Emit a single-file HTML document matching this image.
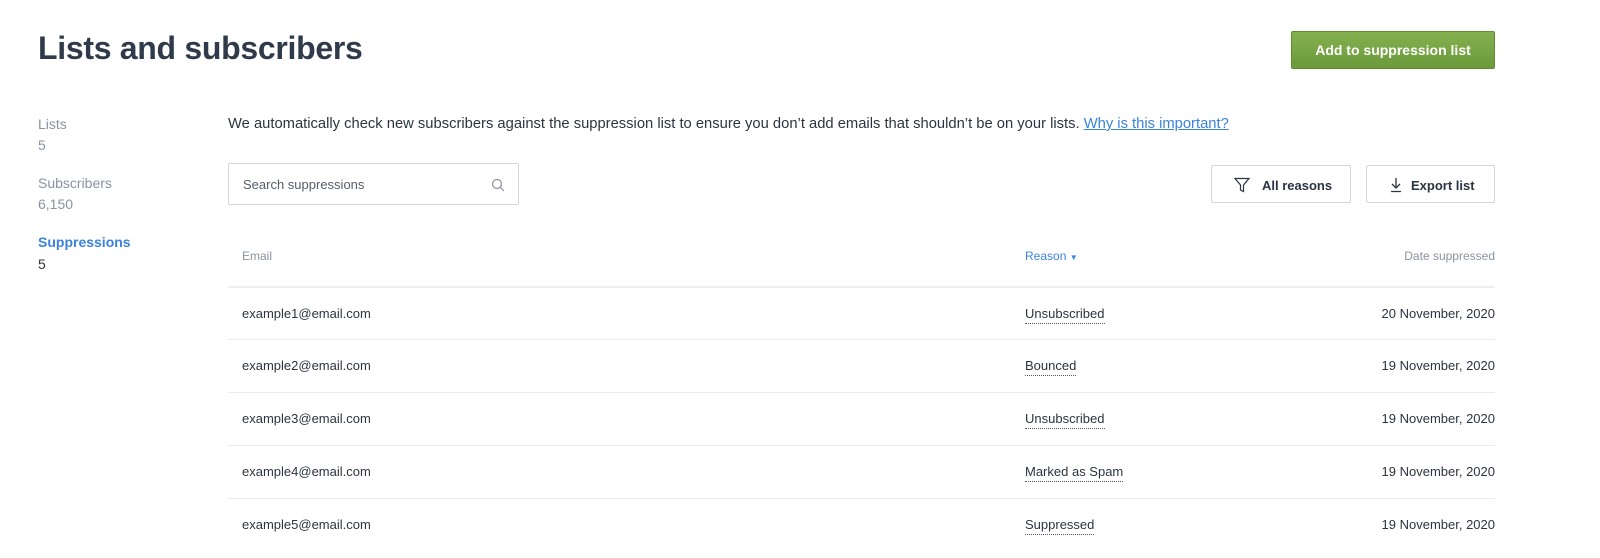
<!DOCTYPE html>
<html><head><style>
body{margin:0;width:1600px;height:558px;background:#fff;font-family:"Liberation Sans",sans-serif;overflow:hidden;position:relative;color:#2b3440}
.a{position:absolute}
h1{position:absolute;left:38px;top:30px;margin:0;font-size:32px;font-weight:bold;color:#2f3a4b;letter-spacing:-0.3px}
.btn{position:absolute;left:1291px;top:31px;width:204px;height:38px;background:linear-gradient(#86b050,#6a9a3a);border:1px solid #5f8d33;border-radius:2px;color:#fff;font-weight:bold;font-size:14px;line-height:36px;text-align:center;box-sizing:border-box}
.side{font-size:14px;color:#8a93a0}
.box{position:absolute;border:1px solid #d3d7dd;border-radius:2px;box-sizing:border-box;background:#fff}
.row{position:absolute;left:228px;width:1267px;height:53px;border-top:1px solid #e8eaed;font-size:13px}
.row span{position:absolute;top:18px}
.r{border-bottom:1px dotted #556;padding-bottom:2px}
</style></head><body>
<h1>Lists and subscribers</h1>
<div class="btn">Add to suppression list</div>
<div class="a side" style="left:38px;top:116px">Lists</div>
<div class="a side" style="left:38px;top:137px">5</div>
<div class="a side" style="left:38px;top:175px">Subscribers</div>
<div class="a side" style="left:38px;top:196px">6,150</div>
<div class="a" style="left:38px;top:234px;font-size:14px;color:#3b82e0;font-weight:bold">Suppressions</div>
<div class="a" style="left:38px;top:256px;font-size:14px;color:#2b3440">5</div>
<div class="a" style="left:228px;top:116px;font-size:14.75px;color:#2b3440;white-space:nowrap">We automatically check new subscribers against the suppression list to ensure you don’t add emails that shouldn’t be on your lists. <span style="color:#3b82e0;text-decoration:underline">Why is this important?</span></div>
<div class="box" style="left:228px;top:163px;width:291px;height:42px"><span class="a" style="left:14px;top:13px;font-size:13px;color:#555d68">Search suppressions</span>
<svg class="a" style="left:262px;top:14px" width="14" height="14" viewBox="0 0 14 14" fill="none" stroke="#8a93a0" stroke-width="1.2"><circle cx="6" cy="6" r="4.5"/><path d="M9.3 9.3L13 13"/></svg></div>
<div class="box" style="left:1211px;top:165px;width:140px;height:38px"><svg class="a" style="left:22px;top:11px" width="16" height="16" viewBox="0 0 16 16" fill="none" stroke="#2b3440" stroke-width="1.2"><path d="M1 1.5h14L9.5 8v6.5L6.5 13V8z"/></svg><span class="a" style="left:50px;top:12px;font-size:13px;font-weight:bold">All reasons</span></div>
<div class="box" style="left:1366px;top:165px;width:129px;height:38px"><svg class="a" style="left:22px;top:11px" width="14" height="16" viewBox="0 0 14 16" fill="none" stroke="#2b3440" stroke-width="1.3"><path d="M7 1v10M3 7l4 4 4-4M2 14.5h10"/></svg><span class="a" style="left:44px;top:12px;font-size:13px;font-weight:bold">Export list</span></div>
<div class="a" style="left:242px;top:249px;font-size:12px;color:#8a93a0">Email</div>
<div class="a" style="left:1025px;top:249px;font-size:12px;color:#3b82e0">Reason <span style="font-size:8px">▼</span></div>
<div class="a" style="right:105px;top:249px;font-size:12px;color:#8a93a0">Date suppressed</div>
<div class="row" style="top:286px;border-top:2px solid #eceef0"><span style="left:14px">example1@email.com</span><span class="r" style="left:797px">Unsubscribed</span><span style="right:0">20 November, 2020</span></div>
<div class="row" style="top:339px"><span style="left:14px">example2@email.com</span><span class="r" style="left:797px">Bounced</span><span style="right:0">19 November, 2020</span></div>
<div class="row" style="top:392px"><span style="left:14px">example3@email.com</span><span class="r" style="left:797px">Unsubscribed</span><span style="right:0">19 November, 2020</span></div>
<div class="row" style="top:445px"><span style="left:14px">example4@email.com</span><span class="r" style="left:797px">Marked as Spam</span><span style="right:0">19 November, 2020</span></div>
<div class="row" style="top:498px"><span style="left:14px">example5@email.com</span><span class="r" style="left:797px">Suppressed</span><span style="right:0">19 November, 2020</span></div>
</body></html>
